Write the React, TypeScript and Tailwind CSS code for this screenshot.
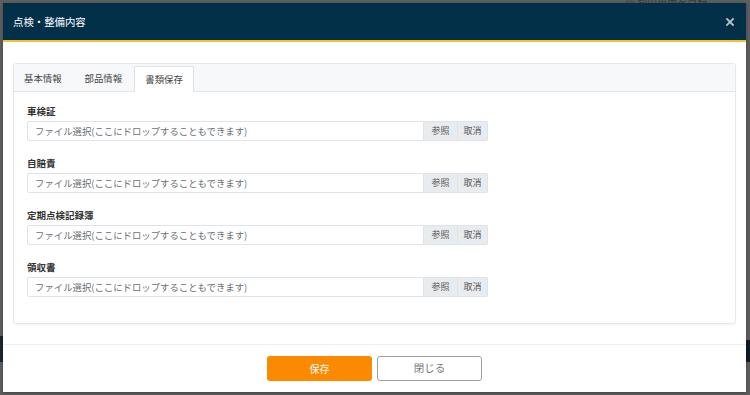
import React from "react";

const font = { fontFamily: '"Noto Sans CJK JP", "Noto Sans", sans-serif' };

function Row({ label }: { label: string }) {
  return (
    <div className="flex flex-col">
      <div className="text-[9.5px] font-bold text-[#333] leading-[14px] mb-[3px]">{label}</div>
      <div className="flex h-[20px] w-[461px]">
        <div className="flex-1 border border-[#dfe2e6] rounded-l-[2px] flex items-center pl-[7px] text-[9.4px] text-[#6b6f73] whitespace-nowrap">
          ファイル選択(ここにドロップすることもできます)
        </div>
        <div className="w-[34px] bg-[#e9ecef] border border-[#dfe2e6] border-l-0 flex items-center justify-center text-[9px] text-[#555]">
          参照
        </div>
        <div className="w-[30px] bg-[#e9ecef] border border-[#dfe2e6] border-l-0 rounded-r-[2px] flex items-center justify-center text-[9px] text-[#555]">
          取消
        </div>
      </div>
    </div>
  );
}

export default function App() {
  return (
    <div className="w-[750px] h-[395px] bg-[#5e5e5e] relative overflow-hidden" style={font}>
      <div className="absolute left-0 top-[336px] w-[3px] h-[26px] bg-[#1b2630]" />
      <div className="absolute right-0 top-[340px] w-[4px] h-[22px] bg-[#0f1c24]" />
      <div className="absolute left-[625px] top-[-2px] text-[10px] text-[#3a3a3a] leading-[8px] whitespace-nowrap">▦ 別の車両を目録</div>
      <div className="absolute left-[3px] top-[3px] w-[743px] h-[389px] bg-white flex flex-col shadow-[0_1px_3px_rgba(0,0,0,0.3)]">
        <div className="h-[37px] bg-[#033049] flex items-center justify-between pl-[10px] pr-[10px] shrink-0">
          <span className="text-white text-[10.4px]">点検・整備内容</span>
          <svg width="8" height="8" viewBox="0 0 8 8" className="mr-[2px]">
            <path d="M1 1 L7 7 M7 1 L1 7" stroke="#b8c2ca" strokeWidth="1.8" strokeLinecap="square" />
          </svg>
        </div>
        <div className="h-[2px] bg-[#f2c230] shrink-0" />
        <div className="px-[10px] pt-[21px] shrink-0">
          <div className="h-[261px] border border-[#e6e8eb] rounded-[3px] shadow-[0_1px_2px_rgba(0,0,0,0.06)] flex flex-col">
            <div className="h-[28px] bg-[#f7f8fa] border-b border-[#e3e5e8] flex items-end text-[9.4px] text-[#444] whitespace-nowrap">
              <div className="pl-[10px] pr-[10px] h-[25px] flex items-center">基本情報</div>
              <div className="pl-[13px] pr-[12px] h-[25px] flex items-center">部品情報</div>
              <div className="h-[26px] -mb-px bg-white border border-[#dfe2e6] border-b-white rounded-t-[2px] flex items-center w-[60px] justify-center">書類保存</div>
            </div>
            <div className="pl-[13px] pt-[12px] flex flex-col gap-[15px]">
              <Row label="車検証" />
              <Row label="自賠責" />
              <Row label="定期点検記録簿" />
              <Row label="領収書" />
            </div>
          </div>
        </div>
        <div className="mt-[20px] border-t border-[#eceef0] flex-1 flex items-center justify-center gap-[5px] pb-[1px]">
          <div className="w-[105px] h-[25px] bg-[#fb8a00] rounded-[3px] text-white text-[10px] flex items-center justify-center">保存</div>
          <div className="w-[105px] h-[25px] border border-[#9aa0a6] rounded-[3px] text-[#777] text-[10.5px] flex items-center justify-center">閉じる</div>
        </div>
      </div>
    </div>
  );
}
